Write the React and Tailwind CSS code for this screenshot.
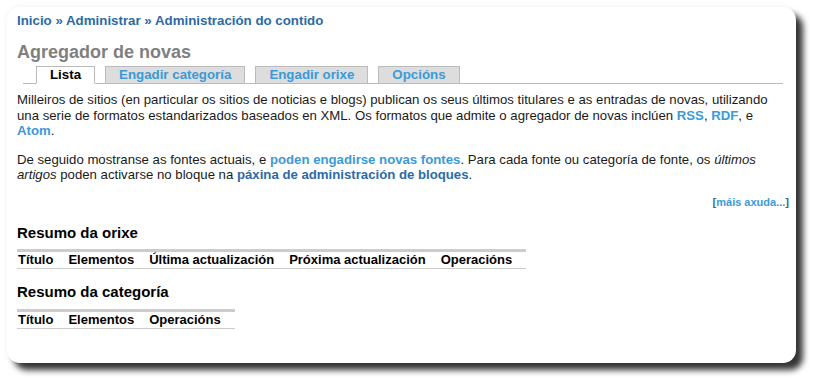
import React from 'react';

const link = "font-bold text-[#3b9ad9]";
const dark = "font-bold text-[#2d6aa6]";

function Tab({ label, active }) {
    return (
        <li
            className={
                active
                    ? "h-[18px] -mb-px px-[13px] bg-white border border-[#bbb] border-b-white text-black leading-[16px]"
                    : "h-[17px] px-[13px] bg-[#ddd] border border-b-0 border-[#bbb] text-[#3b9ad9] leading-[16px]"
            }
        >
            {label}
        </li>
    );
}

function SummaryTable({ cols }) {
    return (
        <table className="border-collapse text-[13px] font-bold text-black">
            <thead>
                <tr className="border-t-[3px] border-b border-[#ccc]">
                    {cols.map((c) => (
                        <th key={c} className="text-left pr-[14px] pl-px h-[17px] leading-[16px] whitespace-nowrap">
                            {c}
                        </th>
                    ))}
                </tr>
            </thead>
        </table>
    );
}

export default function App() {
    return (
        <div className="w-[819px] h-[387px] bg-white font-['Liberation_Sans',Arial,sans-serif] pt-[7px] pl-[7px]">
            <div className="w-[789px] h-[356px] bg-white rounded-[13px] shadow-[7px_7px_6px_rgba(0,0,0,0.8),0_0_6px_rgba(0,0,0,0.06)] pl-[10px] pr-[7px] pt-[6px]">
                {/* Breadcrumb */}
                <div className={"text-[13.3px] leading-[16px] " + dark}>
                    Inicio » Administrar » Administración do contido
                </div>

                <h2 className="mt-[13px] text-[18px] leading-[20px] font-bold text-[#7f7f7f]">Agregador de novas</h2>

                {/* Tabs */}
                <ul className="mt-[4px] ml-[6px] mr-[6px] flex items-end gap-[10px] pl-[13px] border-b border-[#bbb] text-[13.3px] font-bold">
                    <Tab label="Lista" active />
                    <Tab label="Engadir categoría" />
                    <Tab label="Engadir orixe" />
                    <Tab label="Opcións" />
                </ul>

                <div className="text-[13.2px] leading-[15.5px] text-[#1a1a1a]">
                    <p className="mt-[8px] pr-[10px]">
                        Milleiros de sitios (en particular os sitios de noticias e blogs) publican os seus últimos titulares e as entradas de novas, utilizando
                        una serie de formatos estandarizados baseados en XML. Os formatos que admite o agregador de novas inclúen{' '}
                        <span className={link}>RSS</span>, <span className={link}>RDF</span>, e <span className={link}>Atom</span>.
                    </p>
                    <p className="mt-[13px] pr-[10px]">
                        De seguido mostranse as fontes actuais, e <span className={link}>poden engadirse novas fontes</span>. Para cada fonte ou categoría de fonte, os{' '}
                        <em>últimos artigos</em> poden activarse no bloque na <span className={dark}>páxina de administración de bloques</span>.
                    </p>
                    <div className="mt-[12px] text-right text-[11px] leading-[14px] font-bold text-[#2d6aa6]">
                        [<span className="text-[#3b9ad9]">máis axuda...</span>]
                    </div>
                </div>

                <h3 className="mt-[15px] text-[15px] leading-[18px] font-bold text-black">Resumo da orixe</h3>
                <div className="mt-[7px]">
                    <SummaryTable cols={["Título", "Elementos", "Última actualización", "Próxima actualización", "Operacións"]} />
                </div>

                <h3 className="mt-[14px] text-[15px] leading-[18px] font-bold text-black">Resumo da categoría</h3>
                <div className="mt-[8px]">
                    <SummaryTable cols={["Título", "Elementos", "Operacións"]} />
                </div>
            </div>
        </div>
    );
}
